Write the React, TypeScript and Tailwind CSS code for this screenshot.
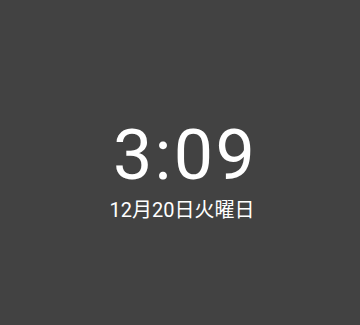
export default function App() {
  return (
    <main className="flex h-[325px] w-[360px] flex-col items-center bg-[#424242] text-white">
      <div className="mt-[120px] pl-[10px] text-[70px] font-normal leading-none tracking-[2.3px] [font-family:Roboto,sans-serif]">
        3:09
      </div>
      <div className="mt-[10px] pl-[4px] text-[20px] leading-none [font-family:Roboto,'Noto_Sans_CJK_JP',sans-serif]">
        12月20日火曜日
      </div>
    </main>
  );
}
